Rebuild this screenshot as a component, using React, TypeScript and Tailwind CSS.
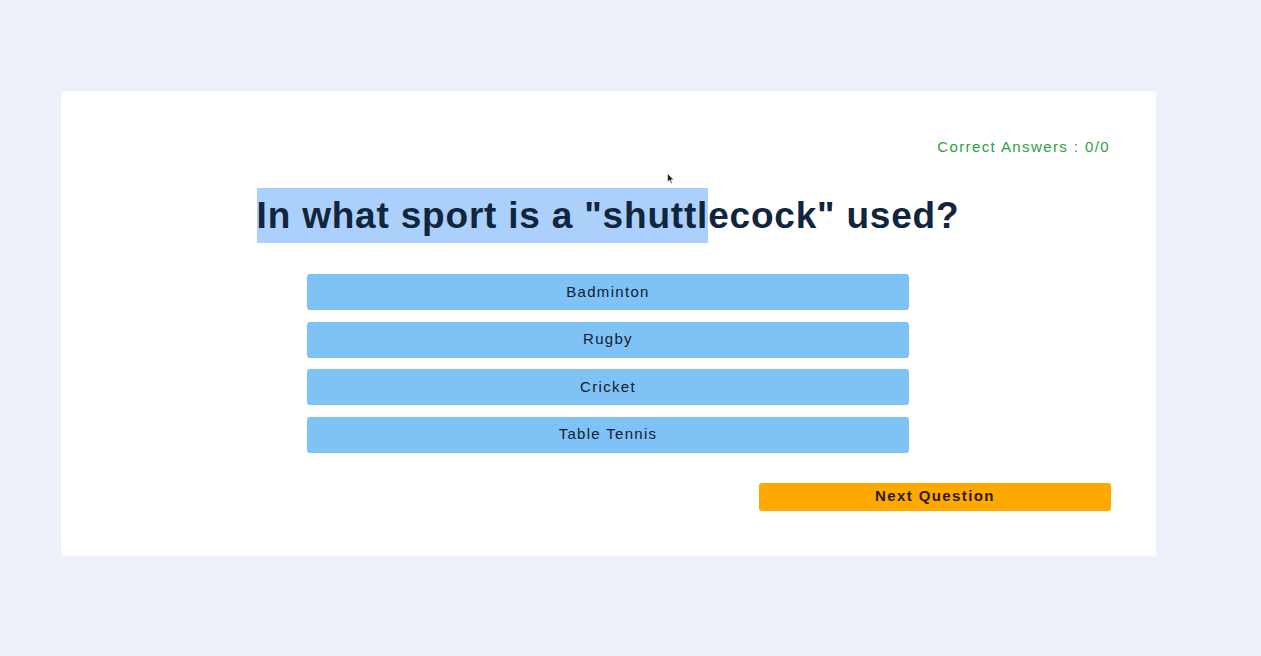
import React from "react";

const answers = ["Badminton", "Rugby", "Cricket", "Table Tennis"];

export default function App() {
  return (
    <div className="relative min-h-[656px] w-full bg-[#edf2fa] pt-[91px] pl-[61px]" style={{ fontFamily: '"Liberation Sans", Arial, sans-serif' }}>
      <div className="w-[1095px] h-[465px] bg-white rounded-[4px] pl-[45px] pr-[46px] pt-[47px] flex flex-col">
        <div className="flex justify-end">
          <span className="text-[15px] leading-[18px] tracking-[1.4px] text-[#2aa13f]">Correct Answers : 0/0</span>
        </div>
        <h1 className="mt-[32px] text-center text-[37px] leading-[55px] font-bold text-[#11253c] tracking-[0.8px]">
          <span className="inline-block leading-[55px] bg-[#abd0fb]">In what sport is a "shuttl</span>ecock" used?
        </h1>
        <div className="mt-[31px] flex flex-col gap-[11.5px] items-center">
          {answers.map((a) => (
            <button
              key={a}
              className="w-[602px] h-[36px] rounded-[3px] bg-[#7fc2f6] text-[15px] tracking-[1.3px] text-[#14202c]"
            >
              {a}
            </button>
          ))}
        </div>
        <div className="mt-[30px] flex justify-end">
          <button className="w-[352px] h-[28px] -mr-px rounded-[3px] bg-[#ffa800] text-[15px] font-bold tracking-[1.4px] text-[#2a1a05]">
            Next Question
          </button>
        </div>
      </div>
      <svg className="absolute left-[667px] top-[173px]" width="8" height="12" viewBox="0 0 8 12">
        <path d="M0.5 0.5 L0.5 9 L2.6 7.2 L4 10.5 L5.3 10 L3.9 6.8 L6.8 6.8 Z" fill="#222" stroke="#fff" strokeWidth="0.6" />
      </svg>
    </div>
  );
}
